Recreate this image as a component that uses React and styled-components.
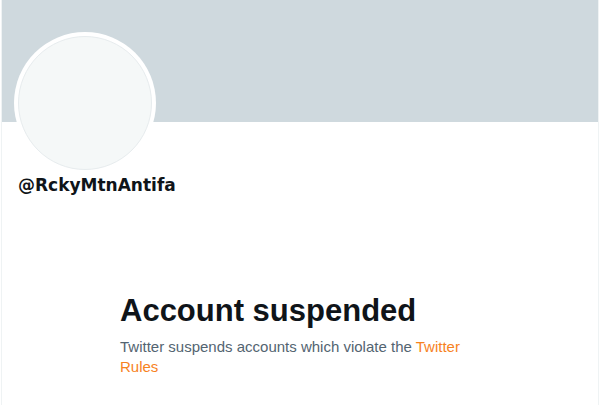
import React from 'react'
import styled, { createGlobalStyle } from 'styled-components'

const GlobalStyle = createGlobalStyle`
  html, body {
    margin: 0;
    padding: 0;
    background: #fff;
  }
  body {
    font-family: 'Liberation Sans', Arial, sans-serif;
  }
`

const Column = styled.main`
  box-sizing: border-box;
  width: 598px;
  min-height: 100vh;
  margin-left: 1px;
  border-left: 1px solid #eff3f4;
  border-right: 1px solid #eff3f4;
  display: flex;
  flex-direction: column;
`

const Banner = styled.div`
  height: 122px;
  background: #cfd9de;
`

const Profile = styled.section`
  display: flex;
  flex-direction: column;
  align-items: flex-start;
  padding: 0 12px;
`

const AvatarRing = styled.div`
  box-sizing: border-box;
  width: 142px;
  height: 142px;
  margin-top: -90px;
  padding: 4px;
  border-radius: 50%;
  background: #fff;
`

const AvatarFace = styled.div`
  box-sizing: border-box;
  width: 100%;
  height: 100%;
  border-radius: 50%;
  background: #f5f8f8;
  border: 1px solid #e7ecee;
`

const Handle = styled.div`
  margin: 1px 0 0 4px;
  font-family: 'DejaVu Sans', Verdana, sans-serif;
  font-weight: 700;
  font-size: 17px;
  line-height: 20px;
  color: #0f1419;
`

const EmptyState = styled.section`
  box-sizing: border-box;
  width: 100%;
  max-width: 400px;
  margin: 98px auto 0;
  padding: 0 20px;
`

const Title = styled.h1`
  margin: 0 0 8px;
  font-size: 31px;
  line-height: 36px;
  font-weight: 700;
  color: #0f1419;
`

const Message = styled.p`
  margin: 0;
  font-size: 15px;
  line-height: 20px;
  color: #536471;
`

const RulesLink = styled.a`
  color: #f7821e;
  text-decoration: none;
`

export default function App() {
  return (
    <>
      <GlobalStyle />
      <Column>
        <Banner />
        <Profile>
          <AvatarRing>
            <AvatarFace />
          </AvatarRing>
          <Handle>@RckyMtnAntifa</Handle>
        </Profile>
        <EmptyState>
          <Title>Account suspended</Title>
          <Message>
            Twitter suspends accounts which violate the{' '}
            <RulesLink href="#">Twitter Rules</RulesLink>
          </Message>
        </EmptyState>
      </Column>
    </>
  )
}
